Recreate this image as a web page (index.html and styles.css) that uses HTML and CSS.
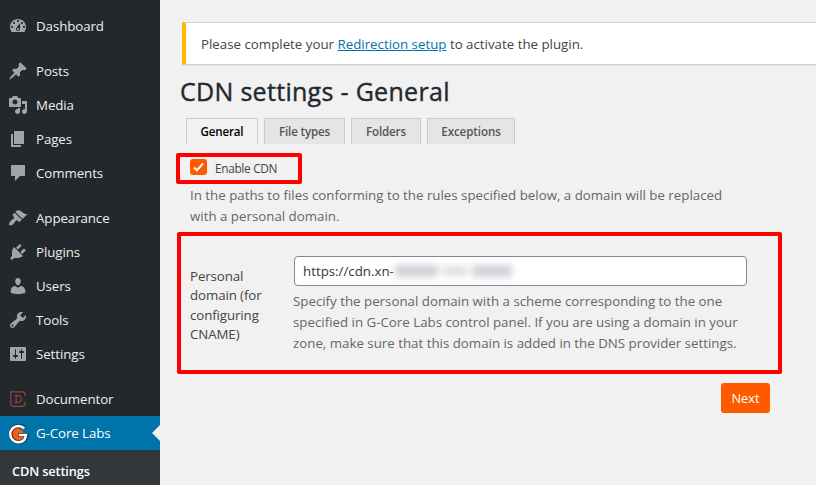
FILE: index.html
```html
<!DOCTYPE html>
<html lang="en">
<head>
<meta charset="utf-8">
<title>CDN settings - General</title>
<link rel="stylesheet" href="styles.css">
</head>
<body>
<div class="layout">
  <nav class="menu">
    <a class="item"><svg class="icon" viewBox="0 0 20 20"><path d="M3.76 16h12.48c1.1-1.37 1.76-3.11 1.76-5 0-4.42-3.58-8-8-8s-8 3.58-8 8c0 1.89.66 3.63 1.76 5zM10 4c.55 0 1 .45 1 1s-.45 1-1 1-1-.45-1-1 .45-1 1-1zM6 6c.55 0 1 .45 1 1s-.45 1-1 1-1-.45-1-1 .45-1 1-1zm8 0c.55 0 1 .45 1 1s-.45 1-1 1-1-.45-1-1 .45-1 1-1zm-5.37 5.55L12 7v6c0 1.1-.9 2-2 2s-2-.9-2-2c0-.57.24-1.08.63-1.45zM4 10c.55 0 1 .45 1 1s-.45 1-1 1-1-.45-1-1 .45-1 1-1zm12 0c.55 0 1 .45 1 1s-.45 1-1 1-1-.45-1-1 .45-1 1-1zm-5 3c0-.55-.45-1-1-1s-1 .45-1 1 .45 1 1 1 1-.45 1-1z"/></svg><span>Dashboard</span></a>
    <a class="item gap"><svg class="icon" viewBox="0 0 20 20"><path d="M10.44 3.02l1.82-1.82 6.36 6.35-1.83 1.82c-1.05-.68-2.48-.57-3.41.36l-.75.75c-.92.93-1.04 2.35-.35 3.41l-1.83 1.82-2.41-2.41-2.8 2.79c-.42.42-3.38 2.71-3.8 2.29s1.86-3.39 2.28-3.81l2.79-2.79L4.1 9.36l1.83-1.82c1.05.69 2.48.57 3.4-.36l.75-.75c.93-.92 1.05-2.35.36-3.41z"/></svg><span>Posts</span></a>
    <a class="item"><svg class="icon" viewBox="0 0 20 20"><path d="M13 11V4c0-.55-.45-1-1-1h-1.67L9 1H5L3.67 3H2c-.55 0-1 .45-1 1v7c0 .55.45 1 1 1h10c.55 0 1-.45 1-1zM7 4.5c1.38 0 2.5 1.12 2.5 2.5S8.38 9.5 7 9.5 4.5 8.38 4.5 7 5.62 4.5 7 4.5zM14 6h5v10.5c0 1.38-1.12 2.5-2.5 2.5S14 17.88 14 16.5s1.12-2.5 2.5-2.5c.17 0 .34.02.5.05V9h-3V6zm-4 8.05V13h2v3.5c0 1.38-1.12 2.5-2.5 2.5S7 17.88 7 16.5 8.12 14 9.5 14c.17 0 .34.02.5.05z"/></svg><span>Media</span></a>
    <a class="item"><svg class="icon" viewBox="0 0 20 20"><path d="M6 15V2h10v13H6zm-1 1h8v2H3V5h2v11z"/></svg><span>Pages</span></a>
    <a class="item"><svg class="icon" viewBox="0 0 20 20"><path d="M4 2h12c.55 0 1 .45 1 1v9c0 .55-.45 1-1 1h-4l-5 5v-5H4c-.55 0-1-.45-1-1V3c0-.55.45-1 1-1z"/></svg><span>Comments</span></a>
    <a class="item gap"><svg class="icon" viewBox="0 0 20 20"><path d="M14.48 11.06L7.41 3.99l1.5-1.5c.5-.56 2.3-.47 3.51.32 1.21.8 1.43 1.28 2.91 2.1 1.18.64 2.45 1.26 4.45.85zm-.71.71L6.7 4.7 4.93 6.47c-.39.39-.39 1.02 0 1.41l1.06 1.06c.39.39.39 1.03 0 1.42-.6.6-1.43 1.11-2.21 1.69-.35.26-.7.53-1.01.84C1.43 14.23.4 16.08 1.4 17.07c.99 1 2.84-.03 4.18-1.36.31-.31.58-.66.85-1.02.57-.78 1.08-1.61 1.69-2.21.39-.39 1.02-.39 1.41 0l1.06 1.06c.39.39 1.02.39 1.41 0z"/></svg><span>Appearance</span></a>
    <a class="item"><svg class="icon" viewBox="0 0 20 20"><path d="M13.11 4.36L9.87 7.6 8 5.73l3.24-3.24c.35-.34 1.05-.2 1.56.32.52.51.66 1.21.31 1.55zm-8 1.77l.91-1.12 9.01 9.01-1.19.84c-.71.71-2.63 1.16-3.82 1.16H6.14L4.9 17.26c-.59.59-1.54.59-2.12 0-.59-.58-.59-1.53 0-2.12l1.24-1.24v-3.88c0-1.13.4-3.19 1.09-3.89zm7.26 3.97l3.24-3.24c.34-.35 1.04-.21 1.55.31.52.51.66 1.21.31 1.55l-3.24 3.25z"/></svg><span>Plugins</span></a>
    <a class="item"><svg class="icon" viewBox="0 0 20 20"><path d="M10 9.25c-2.27 0-2.73-3.44-2.73-3.44C7 4.02 7.82 2 9.97 2c2.16 0 2.98 2.02 2.71 3.81 0 0-.41 3.44-2.68 3.44zm0 2.57L12.72 10c2.39 0 4.52 2.33 4.52 4.53v2.49s-3.65 1.13-7.24 1.13c-3.65 0-7.24-1.13-7.24-1.13v-2.49c0-2.25 1.94-4.48 4.47-4.48z"/></svg><span>Users</span></a>
    <a class="item"><svg class="icon" viewBox="0 0 20 20"><path d="M16.68 9.77c-1.34 1.34-3.3 1.67-4.95.99l-5.41 6.52c-.99.99-2.59.99-3.58 0s-.99-2.59 0-3.57l6.52-5.42c-.68-1.65-.35-3.61.99-4.95 1.28-1.28 3.12-1.62 4.72-1.06l-2.89 2.89 2.82 2.82 2.86-2.87c.53 1.58.18 3.39-1.08 4.65zM3.81 16.21c.4.39 1.04.39 1.43 0 .4-.4.4-1.04 0-1.43-.39-.4-1.03-.4-1.43 0-.39.39-.39 1.03 0 1.43z"/></svg><span>Tools</span></a>
    <a class="item"><svg class="icon" viewBox="0 0 20 20"><path d="M18 16V4c0-.55-.45-1-1-1H3c-.55 0-1 .45-1 1v12c0 .55.45 1 1 1h14c.55 0 1-.45 1-1zM8 11h1c.55 0 1 .45 1 1s-.45 1-1 1H8v1.5c0 .28-.22.5-.5.5s-.5-.22-.5-.5V13H6c-.55 0-1-.45-1-1s.45-1 1-1h1V5.500c0-.28.22-.5.5-.5s.5.22.5.5V11zm5-2h-1c-.55 0-1-.45-1-1s.45-1 1-1h1V5.500c0-.28.22-.5.5-.5s.5.22.5.5V7h1c.55 0 1 .45 1 1s-.45 1-1 1h-1v5.500c0 .28-.22.5-.5.5s-.5-.22-.5-.5V9z"/></svg><span>Settings</span></a>
    <a class="item gap"><svg class="icon doc" viewBox="0 0 20 20"><path class="frame" d="M17 7V5.500Q17 2.800 14.300 2.800H2.800V14.500Q2.800 17.300 5.500 17.300H14.300Q17 17.300 17 14.500V12.500"/><path class="mark" d="M6.500 6.500H9.500Q13.300 6.500 13.300 10T9.500 13.500H6.500M8.200 6.500V13.500"/></svg><span>Documentor</span></a>
    <a class="item current"><svg class="icon" viewBox="0 0 20 20"><circle cx="9.500" cy="11.700" r="6.300" fill="#ff5a00"/><path class="g-edge" d="M17 5.200A8.300 8.300 0 1 0 17.300 16.200Q18.300 14.500 18.800 12H10.200"/><path class="g-line" d="M16.300 5.400A8.200 8.200 0 1 0 16.300 16.800Q17.500 15 18 12H10.800"/></svg><span>G-Core Labs</span></a>
    <div class="submenu">CDN settings</div>
  </nav>
  <main class="content">
    <div class="notice"><p>Please complete your <a>Redirection setup</a> to activate the plugin.</p></div>
    <h1>CDN settings - General</h1>
    <div class="tabs">
      <a class="tab active t1">General</a><a class="tab t2">File types</a><a class="tab t3">Folders</a><a class="tab t4">Exceptions</a>
    </div>
    <label class="enable marked"><span class="check"><svg viewBox="0 0 17 16"><path d="M4 8.500 6.900 11.300 12.900 4.500"/></svg></span><span>Enable CDN</span></label>
    <p class="intro">In the paths to files conforming to the rules specified below, a domain will be replaced<br>with a personal domain.</p>
    <section class="field marked">
      <div class="label">Personal<br>domain (for<br>configuring<br>CNAME)</div>
      <div class="value">
        <div class="input"><span>https://cdn.xn-</span><i class="redacted"><b></b><b></b><b></b></i></div>
        <p class="help">Specify the personal domain with a scheme corresponding to the one<br>specified in G-Core Labs control panel. If you are using a domain in your<br>zone, make sure that this domain is added in the DNS provider settings.</p>
      </div>
    </section>
    <button class="next">Next</button>
  </main>
</div>
</body>
</html>
```
FILE: styles.css
```css
* { box-sizing: border-box; }
body {
  margin: 0;
  background: #f1f1f1;
  color: #444;
  font: 13.3px/19px "Open Sans", "Noto Sans", sans-serif;
  overflow: hidden;
}
p, h1 { margin: 0; }
.layout { display: flex; width: 816px; height: 485px; }

.menu {
  display: flex;
  flex-direction: column;
  flex: none;
  width: 160px;
  padding-top: 9px;
  background: #23282d;
  color: #eee;
}
.item {
  position: relative;
  display: flex;
  align-items: center;
  flex: none;
  height: 34px;
  padding-left: 8px;
  gap: 8px;
  white-space: nowrap;
  letter-spacing: -.08px;
}
.gap { margin-top: 11px; }
.icon { width: 20px; height: 20px; fill: #a0a5aa; overflow: visible; }
.doc path { fill: none; }
.doc .frame { stroke: #96403f; stroke-width: 1.2; }
.doc .mark { stroke: #80403f; stroke-width: 1.3; }
.g-edge { fill: none; stroke: #263442; stroke-width: 3.8; }
.g-line { fill: none; stroke: #fff; stroke-width: 2.5; }
.current { background: #0073aa; color: #fff; }
.current::after {
  content: "";
  position: absolute;
  right: 0;
  top: 9px;
  border: 8px solid transparent;
  border-left: 0;
  border-right-color: #f1f1f1;
}
.submenu {
  flex: 1;
  padding: 12px 12px 0;
  background: #32373c;
  color: #fff;
  font-weight: 600;
  font-size: 12.800px;
  letter-spacing: -.15px;
}

.content {
  display: flex;
  flex-direction: column;
  align-items: flex-start;
  flex: 1;
  min-width: 0;
  padding: 22px 0 0 16px;
  white-space: nowrap;
}
.notice {
  align-self: stretch;
  height: 43px;
  margin-left: 6px;
  padding: 12px 15px;
  background: #fff;
  border: 1px solid #ccd0d4;
  border-width: 1px 0 1px 4px;
  border-left-color: #ffb900;
  box-shadow: 0 1px 1px rgba(0, 0, 0, .04);
}
.notice a { color: #0073aa; text-decoration: underline; }
h1 {
  height: 36px;
  margin: 8px 0 9px 4px;
  color: #23282d;
  font-size: 25px;
  font-weight: 500;
  line-height: 36px;
  letter-spacing: .3px;
  -webkit-text-stroke: .4px #23282d;
}
.tabs { display: flex; gap: 6px; margin-left: 10px; }
.tab {
  height: 26px;
  border: 1px solid #ccc;
  border-bottom: 0;
  background: #e5e5e5;
  color: #555;
  font-size: 11.600px;
  font-weight: 600;
  line-height: 26px;
  text-align: center;
  letter-spacing: -.18px;
}
.active { background: #f1f1f1; color: #000; }
.t1 { width: 72px; }
.t2 { width: 81px; }
.t3 { width: 70px; }
.t4 { width: 88px; letter-spacing: -.1px; }
.marked { border: 4px solid #f00; border-radius: 2px; }
.enable {
  display: flex;
  gap: 8px;
  width: 126px;
  height: 31px;
  margin-top: 9px;
  padding: 2px 0 0 10px;
  font-size: 11.800px;
  line-height: 19px;
  letter-spacing: -.3px;
}
.check { width: 17px; height: 16px; border-radius: 3px; background: #ff5a00; }
.check svg { display: block; }
.check path { fill: none; stroke: #fff; stroke-width: 2; }
.intro { margin: 1px 0 0 14px; color: #666; line-height: 21px; }
.field {
  display: flex;
  width: 605px;
  height: 142px;
  margin: 5px 0 0 1px;
  padding: 20px 0 0 9px;
}
.label { width: 104px; padding-top: 11px; line-height: 19.400px; letter-spacing: -.1px; }
.input {
  display: flex;
  align-items: center;
  width: 453px;
  height: 30px;
  padding-left: 8px;
  border: 1px solid #7e8993;
  border-radius: 4px;
  background: #fff;
  color: #32373c;
}
.redacted { display: flex; gap: 5px; align-items: center; margin-left: 1px; filter: blur(3.500px); }
.redacted b { width: 43px; height: 12px; background: #cfd1d5; }
.redacted b + b { width: 24px; height: 10px; background: #dcdee2; }
.redacted b + b + b { width: 40px; height: 12px; background: #cfd2d8; }
.help { margin: 5px 0 0 -1px; color: #666; line-height: 21px; }
.next {
  width: 49px;
  height: 30px;
  margin: 9px 0 0 545px;
  padding: 0;
  border: 0;
  border-radius: 3px;
  background: #ff5a00;
  color: #fff;
  font: 500 12.800px/30px "Open Sans", "Noto Sans", sans-serif;
}
```
